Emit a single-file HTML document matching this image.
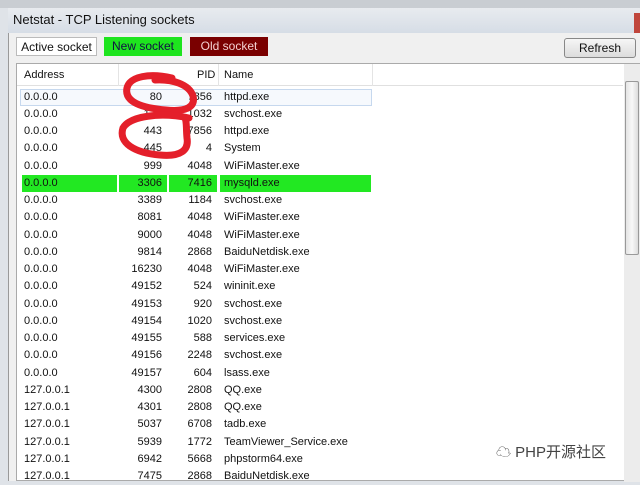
<!DOCTYPE html>
<html><head><meta charset="utf-8"><style>
*{margin:0;padding:0;box-sizing:border-box}
body{width:640px;height:481px;overflow:hidden;background:#dfe3e8;font-family:"Liberation Sans","Noto Sans CJK SC",sans-serif;font-size:11px;color:#111;position:relative}
.title{position:absolute;left:8px;top:8px;width:632px;height:25px;background:linear-gradient(#e8ebef,#d6dde6);}
.title span{position:absolute;left:5px;top:4px;font-size:13px;color:#111}
.close{position:absolute;right:0;top:5px;width:6px;height:20px;background:#c0463c}
.body{position:absolute;left:8px;top:33px;width:632px;height:448px;background:#f0f0f0;border-left:1px solid #999}
.btn{position:absolute;top:37px;height:19px;font-size:12px;line-height:19px;text-align:center}
.list{position:absolute;left:16px;top:63px;width:624px;height:418px;background:#fff;border:1px solid #aaa}
.hdr{position:absolute;left:0;top:0;width:606px;height:22px;border-bottom:1px solid #e0e0e0;background:#fff}
.hdr div,.row div{position:absolute;top:0}
.row{position:absolute;left:0;width:606px;height:17px;line-height:17px;font-size:11px}
.sb{position:absolute;left:607px;top:0;width:16px;height:418px;background:#ececec}
</style></head><body>
<div style="position:absolute;left:0;top:0;width:640px;height:8px;background:#c9cdd2"></div>
<div class="title"><span>Netstat - TCP Listening sockets</span><div class="close"></div></div>
<div class="body"></div>
<div class="btn" style="left:16px;width:81px;background:#fff;border:1px solid #bbb">Active socket</div>
<div class="btn" style="left:104px;width:78px;background:#1ee41e;color:#114">New socket</div>
<div class="btn" style="left:190px;width:78px;background:#7a0000;color:#f4d0d0">Old socket</div>
<div class="btn" style="left:564px;top:38px;width:72px;height:20px;background:linear-gradient(#f6f6f6,#dcdcdc);border:1px solid #888;border-radius:3px">Refresh</div>
<div class="list">
<div class="hdr">
<div style="left:7px;top:5px">Address</div>
<div style="left:101px;width:1px;height:22px;background:#e4e4e4"></div>
<div style="left:180px;top:5px">PID</div>
<div style="left:201px;width:1px;height:22px;background:#e4e4e4"></div>
<div style="left:207px;top:5px">Name</div>
<div style="left:355px;width:1px;height:22px;background:#e4e4e4"></div>
</div>
<div id="rows"></div>
<div class="sb"><div style="position:absolute;left:1px;top:17px;width:14px;height:174px;background:linear-gradient(90deg,#e4e4e4,#f8f8f8,#dcdcdc);border:1px solid #999;border-radius:2px"></div></div>
</div>
<script>
var d=[["0.0.0.0",80,7856,"httpd.exe"],["0.0.0.0",135,1032,"svchost.exe"],["0.0.0.0",443,7856,"httpd.exe"],["0.0.0.0",445,4,"System"],["0.0.0.0",999,4048,"WiFiMaster.exe"],["0.0.0.0",3306,7416,"mysqld.exe"],["0.0.0.0",3389,1184,"svchost.exe"],["0.0.0.0",8081,4048,"WiFiMaster.exe"],["0.0.0.0",9000,4048,"WiFiMaster.exe"],["0.0.0.0",9814,2868,"BaiduNetdisk.exe"],["0.0.0.0",16230,4048,"WiFiMaster.exe"],["0.0.0.0",49152,524,"wininit.exe"],["0.0.0.0",49153,920,"svchost.exe"],["0.0.0.0",49154,1020,"svchost.exe"],["0.0.0.0",49155,588,"services.exe"],["0.0.0.0",49156,2248,"svchost.exe"],["0.0.0.0",49157,604,"lsass.exe"],["127.0.0.1",4300,2808,"QQ.exe"],["127.0.0.1",4301,2808,"QQ.exe"],["127.0.0.1",5037,6708,"tadb.exe"],["127.0.0.1",5939,1772,"TeamViewer_Service.exe"],["127.0.0.1",6942,5668,"phpstorm64.exe"],["127.0.0.1",7475,2868,"BaiduNetdisk.exe"]];
var h="";d.forEach(function(r,i){var t=24.5+i*17.25;var g=i==5;
var bg=g?'<div style="left:5px;width:95px;height:17px;background:#22e822"></div><div style="left:102px;width:48px;height:17px;background:#22e822"></div><div style="left:152px;width:48px;height:17px;background:#22e822"></div><div style="left:203px;width:151px;height:17px;background:#22e822"></div>':(i==0?'<div style="left:3px;width:352px;height:17px;border:1px solid #c6d8ee;background:#f6f9fd"></div>':'');
h+='<div class="row" style="top:'+t+'px">'+bg+'<div style="left:7px">'+r[0]+'</div><div style="left:100px;width:45px;text-align:right">'+r[1]+'</div><div style="left:150px;width:45px;text-align:right">'+r[2]+'</div><div style="left:207px">'+r[3]+'</div></div>';});
document.getElementById("rows").innerHTML=h;
</script>
<svg style="position:absolute;left:0;top:0" width="640" height="481"><g fill="none" stroke="#e41f2a" stroke-width="7" stroke-linecap="round">
<path d="M172 78 C150 73 130 76 127 88 C124 102 142 108 166 110 C186 112 196 107 193 96 C189 84 172 79 155 80"/>
<path d="M189 118 C160 112 130 116 123 128 C118 143 135 153 160 155 C181 157 189 150 187 138 C186 128 187 122 185 118"/>
</g></svg>
<div style="position:absolute;left:494px;top:441px;font-size:15px;color:#444;background:rgba(255,255,255,.85);padding:0 2px">☁ PHP开源社区</div>
</body></html>
